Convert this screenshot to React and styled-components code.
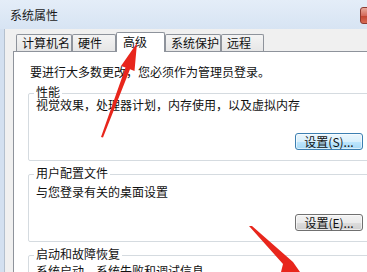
import React from 'react';
import styled, { createGlobalStyle } from 'styled-components';

const GlobalStyle = createGlobalStyle`
    html, body {
        margin: 0;
        padding: 0;
        overflow: hidden;
        background: #f0f0f0;
    }
    body {
        font-family: "Noto Sans CJK SC", "Noto Sans", sans-serif;
        font-size: 12px;
        color: #111;
    }
`;

function App() {

    const tabs = [
        { label: '计算机名', width: 56 },
        { label: '硬件', width: 44 },
        { label: '高级', width: 49, active: true },
        { label: '系统保护', width: 56 },
        { label: '远程', width: 43 },
    ];

    return (
        <>
            <GlobalStyle />
            <Window>
                <TitleBar>
                    <Title>系统属性</Title>
                    <CloseButton />
                </TitleBar>

                <Client>
                    <TabRow>
                        {tabs.map(t => (
                            <Tab key={t.label} $width={t.width} $active={t.active}>{t.label}</Tab>
                        ))}
                    </TabRow>

                    <Panel>
                        <Notice>要进行大多数更改，您必须作为管理员登录。</Notice>

                        <Group>
                            <GroupTitle>性能</GroupTitle>
                            <Desc $top={5}>视觉效果，处理器计划，内存使用，以及虚拟内存</Desc>
                            <ButtonRow>
                                <Button $primary>设置(S)...</Button>
                            </ButtonRow>
                        </Group>

                        <Group>
                            <GroupTitle>用户配置文件</GroupTitle>
                            <Desc $top={11}>与您登录有关的桌面设置</Desc>
                            <ButtonRow>
                                <Button>设置(E)...</Button>
                            </ButtonRow>
                        </Group>

                        <Group>
                            <GroupTitle>启动和故障恢复</GroupTitle>
                            <Desc $top={9}>系统启动、系统失败和调试信息</Desc>
                        </Group>
                    </Panel>
                </Client>

                <Arrows viewBox="0 0 367 272" width="367" height="272">
                    <polygon
                        fill="#e8261c"
                        points="137,43 121,66 125.5,67.5 101,137 103,137.5 130,69.2 134.5,71"
                    />
                    <polygon
                        fill="#e8261c"
                        points="249,226 252,226 293,262 300,272 281,272 283,264"
                    />
                </Arrows>
            </Window>
        </>
    )
}

const Window = styled.div`
    position: relative;
    width: 410px;
    height: 272px;
    overflow: hidden;
    background: #d3e0f0;
    display: flex;
    flex-direction: column;
`;

const TitleBar = styled.div`
    height: 29px;
    flex-shrink: 0;
    display: flex;
    align-items: flex-start;
    padding: 0 7px 0 10px;
    box-sizing: border-box;
    background: linear-gradient(#e4edf8, #d7e4f3);
`;

const Title = styled.div`
    font-size: 12px;
    line-height: 16px;
    margin-top: 7px;
    color: #1a1a1a;
`;

const CloseButton = styled.div`
    margin-left: auto;
    margin-top: 7px;
    width: 43px;
    height: 17px;
    box-sizing: border-box;
    border: 1px solid #8d3a31;
    border-radius: 3px;
    background: linear-gradient(#e9a99c, #d46a5c 50%, #c2412f 51%, #d76b55);
`;

const Client = styled.div`
    flex: 1;
    margin-left: 4px;
    border-left: 1px solid #b4c0ce;
    background: #f0f0f0;
    padding: 3px 0 0 8px;
    display: flex;
    flex-direction: column;
`;

const TabRow = styled.div`
    display: flex;
    align-items: flex-end;
    height: 19px;
    margin-left: 3px;
`;

const Tab = styled.div`
    position: relative;
    z-index: ${p => (p.$active ? 2 : 1)};
    width: ${p => p.$width}px;
    height: ${p => (p.$active ? 20 : 17)}px;
    margin-bottom: ${p => (p.$active ? -1 : 0)}px;
    box-sizing: border-box;
    padding-left: ${p => (p.$active ? 6 : 5)}px;
    border: 1px solid #8e939b;
    border-bottom: none;
    border-radius: 2px 2px 0 0;
    background: ${p => (p.$active ? '#ffffff' : 'linear-gradient(#f4f4f4, #e6e6e6)')};
    font-size: 12px;
    line-height: ${p => (p.$active ? 17 : 15)}px;
    color: #111;
    white-space: nowrap;
`;

const Panel = styled.div`
    width: 375px;
    flex: 1;
    box-sizing: border-box;
    border: 1px solid #8e939b;
    background: #ffffff;
    padding: 12px 14px;
`;

const Notice = styled.div`
    margin-left: 2px;
    line-height: 16px;
    font-size: 12px;
`;

const Group = styled.div`
    position: relative;
    height: 68px;
    box-sizing: border-box;
    margin-top: 13px;
    border: 1px solid #d5dbe0;
    border-radius: 2px;
    padding: 0 9px 10px 7px;
    display: flex;
    flex-direction: column;

    &:first-of-type {
        margin-top: 11px;
    }
`;

const GroupTitle = styled.div`
    position: absolute;
    top: -8px;
    left: 5px;
    padding: 0 2px;
    background: #ffffff;
    line-height: 12px;
    font-size: 12px;
`;

const Desc = styled.div`
    margin-top: ${p => p.$top}px;
    line-height: 12px;
    font-size: 12px;
    white-space: nowrap;
`;

const ButtonRow = styled.div`
    margin-top: auto;
    display: flex;
    justify-content: flex-end;
`;

const Button = styled.div`
    width: 68px;
    height: 17px;
    box-sizing: border-box;
    border: 1px solid ${p => (p.$primary ? '#3c7fb1' : '#707070')};
    border-radius: 3px;
    background: ${p => (p.$primary
        ? 'linear-gradient(#eaf6fd, #d9f0fc 50%, #bee6fd 51%, #a7d9f5)'
        : 'linear-gradient(#f2f2f2, #ebebeb 50%, #dddddd 51%, #cfcfcf)')};
    box-shadow: inset 0 0 0 1px rgba(255, 255, 255, 0.6);
    font-size: 12px;
    line-height: 15px;
    text-align: center;
    color: #111;
    white-space: nowrap;
`;

const Arrows = styled.svg`
    position: absolute;
    top: 0;
    left: 0;
    pointer-events: none;
    z-index: 5;
`;

export default App
